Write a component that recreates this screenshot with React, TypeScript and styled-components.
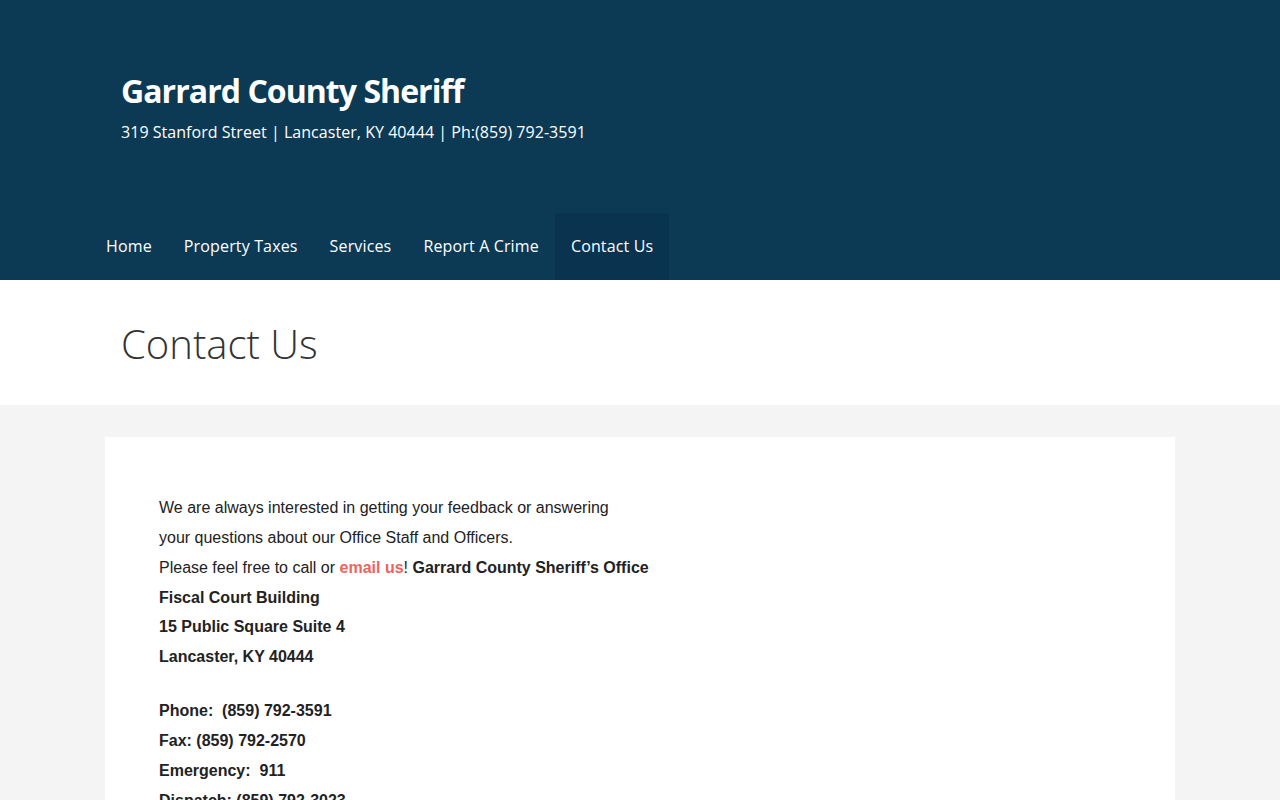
import React from 'react'
import styled, { createGlobalStyle } from 'styled-components'

const GlobalStyle = createGlobalStyle`
  html, body {
    margin: 0;
    padding: 0;
    background: #f4f4f4;
  }
  * {
    box-sizing: border-box;
  }
`

const Header = styled.header`
  background-color: #0c3a55;
  height: 280px;
  display: flex;
  flex-direction: column;
  justify-content: space-between;
`

const Container = styled.div`
  width: 1070px;
  margin: 0 auto;
`

const Branding = styled.div`
  padding: 70px 16px 0;
  font-family: 'Open Sans', sans-serif;
  color: #ffffff;

  h1 {
    margin: 0;
    font-size: 32px;
    font-weight: 700;
    line-height: 42px;
    letter-spacing: -0.95px;
  }

  p {
    margin: 9px 0 0;
    font-size: 16px;
    line-height: 22px;
    letter-spacing: 0.04px;
  }
`

const NavList = styled.nav`
  display: flex;
  margin-left: -15px;
  font-family: 'Open Sans', sans-serif;
`

const NavItem = styled.a<{ $active?: boolean }>`
  display: block;
  color: #ffffff;
  font-size: 16px;
  line-height: 67px;
  padding: 0 16px;
  letter-spacing: 0.15px;
  text-decoration: none;
  background-color: ${(p) => (p.$active ? '#0a3350' : 'transparent')};
`

const TitleBand = styled.div`
  background: #ffffff;
  height: 125px;
  display: flex;
  align-items: center;

  h2 {
    margin: 0;
    padding: 2px 16px 0;
    font-family: 'Open Sans', sans-serif;
    font-weight: 300;
    font-size: 40px;
    color: #333333;
  }
`

const Main = styled.main`
  padding-top: 32px;
`

const Card = styled.article`
  background: #ffffff;
  padding: 56px 54px 40px;
  font-family: 'Liberation Sans', Arial, sans-serif;
  font-size: 16px;
  line-height: 29.85px;
  color: #222222;
  min-height: 400px;

  p {
    margin: 0 0 24px;
  }

  a {
    color: #f0625f;
    font-weight: 700;
    text-decoration: none;
  }
`

const menu = ['Home', 'Property Taxes', 'Services', 'Report A Crime', 'Contact Us']

export default function App() {
  return (
    <>
      <GlobalStyle />
      <Header>
        <Container>
          <Branding>
            <h1>Garrard County Sheriff</h1>
            <p>319 Stanford Street | Lancaster, KY 40444 | Ph:(859) 792-3591</p>
          </Branding>
        </Container>
        <Container>
          <NavList>
            {menu.map((label) => (
              <NavItem key={label} href="#" $active={label === 'Contact Us'}>
                {label}
              </NavItem>
            ))}
          </NavList>
        </Container>
      </Header>
      <TitleBand>
        <Container>
          <h2>Contact Us</h2>
        </Container>
      </TitleBand>
      <Main>
        <Container>
          <Card>
            <p>
              We are always interested in getting your feedback or answering
              <br />
              your questions about our Office Staff and Officers.
              <br />
              Please feel free to call or <a href="#">email us</a>!{' '}
              <strong>Garrard County Sheriff’s Office</strong>
              <br />
              <strong>Fiscal Court Building</strong>
              <br />
              <strong>15 Public Square Suite 4</strong>
              <br />
              <strong>Lancaster, KY 40444</strong>
            </p>
            <p>
              <strong>Phone:&nbsp; (859) 792-3591</strong>
              <br />
              <strong>Fax: (859) 792-2570</strong>
              <br />
              <strong>Emergency:&nbsp; 911</strong>
              <br />
              <strong>Dispatch: (859) 792-3023</strong>
            </p>
          </Card>
        </Container>
      </Main>
    </>
  )
}
